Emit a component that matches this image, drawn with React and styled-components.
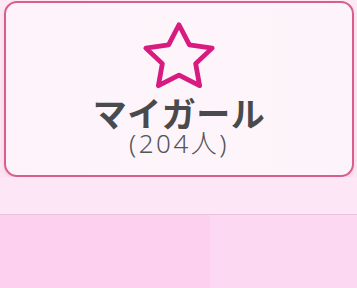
import styled, { createGlobalStyle } from 'styled-components';

const Global = createGlobalStyle`
  html, body { margin: 0; padding: 0; }
  body {
    width: 357px;
    height: 288px;
    overflow: hidden;
    background: #fde6f5;
    font-family: "Noto Sans CJK JP", "Noto Sans", sans-serif;
  }
`;

const Page = styled.div`
  display: flex;
  flex-direction: column;
  height: 288px;
`;

const Top = styled.div`
  padding: 1px 3px 0 4px;
  background: linear-gradient(180deg, #fdeaf6 0%, #fde4f4 100%);
`;

const Card = styled.div`
  height: 172px;
  border: 2px solid #d6608a;
  border-radius: 13px;
  background: linear-gradient(90deg, #fdf2fa 0%, #fef5fb 60%, #fdf3fa 100%);
  display: flex;
  flex-direction: column;
  align-items: center;
  box-shadow: 0 2px 4px rgba(214, 96, 138, 0.18);
`;

const Icon = styled.svg`
  margin-top: 12px;
  width: 86px;
  height: 84px;
  display: block;
`;

const Title = styled.div`
  margin-top: -3px;
  font-size: 34px;
  font-weight: 700;
  color: #4a4a4c;
  line-height: 34px;
  letter-spacing: 0.5px;
`;

const Count = styled.div`
  font-family: "Noto Sans", "Noto Sans CJK JP", sans-serif;
  font-size: 26px;
  font-weight: 300;
  color: #555557;
  line-height: 26px;
  letter-spacing: 2.5px;
`;

const Gap = styled.div`
  height: 37px;
  background: #fde7f6;
`;

const Bottom = styled.div`
  flex: 1;
  display: flex;
  border-top: 1px solid #ecc3dc;
  box-shadow: inset 0 2px 2px rgba(200, 140, 180, 0.2);
`;

const Tile = styled.div`
  width: ${p => p.$w}px;
  flex: ${p => (p.$w ? 'none' : 1)};
  background: ${p => p.$bg};
`;

export default function App() {
  return (
    <Page>
      <Global />
      <Top>
        <Card>
          <Icon viewBox="0 0 24 24" preserveAspectRatio="none">
            <path
              d="M12 2.8l2.9 5.75 6.35.9-4.6 4.45 1.1 6.3L12 17.2 6.25 20.2l1.1-6.3L2.75 9.45l6.35-.9z"
              fill="none"
              stroke="#d81b80"
              strokeWidth="1.35"
              strokeLinejoin="round"
            />
          </Icon>
          <Title>マイガール</Title>
          <Count>(204人)</Count>
        </Card>
      </Top>
      <Gap />
      <Bottom>
        <Tile $w={210} $bg="#fcd0ee" />
        <Tile $bg="#fcd8f3" />
      </Bottom>
    </Page>
  );
}
